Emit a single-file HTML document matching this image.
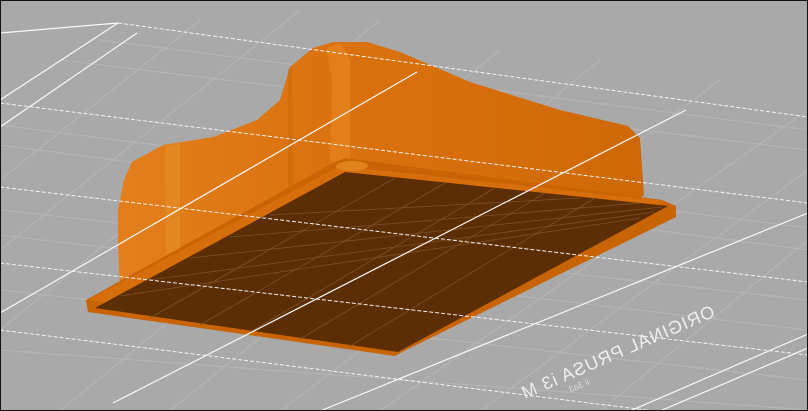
<!DOCTYPE html>
<html><head><style>
html,body{margin:0;padding:0;background:#a8a8a8;overflow:hidden;width:808px;height:411px;}
svg{display:block}
</style></head><body>
<svg width="808" height="411" viewBox="0 0 808 411" xmlns="http://www.w3.org/2000/svg">
<defs>
<linearGradient id="body" x1="0" y1="0" x2="1" y2="0">
<stop offset="0" stop-color="#e27f1c"/><stop offset="0.4" stop-color="#da720e"/><stop offset="1" stop-color="#cf6808"/>
</linearGradient>
</defs>
<rect width="808" height="411" fill="#a9a9a9"/>
<g stroke="#b6b6b6" stroke-width="1" fill="none">
<path d="M0 125 L808 228 M0 145 L808 250 M0 210 L808 300 M0 235 L808 330 M0 290 L808 380 M0 350 L808 410 M60 60 L808 150 M100 40 L808 130"/>
<path d="M60 411 L500 50 M170 411 L600 60 M280 411 L720 80 M380 411 L808 110 M480 411 L808 170 M600 411 L808 240 M0 330 L380 20 M0 250 L300 10 M0 180 L200 20"/>
</g>
<!-- body -->
<path d="M120 290 L118 245 L118 210 L124 180 L132 162 L163 145 L213 137 L257 120 L280 100 L290 67 L313 48 L333 42 L367 42 L400 52 L470 82 L560 110 L628 126 L640 138 L644 195 L630 205 L400 320 Z" fill="url(#body)"/>
<path d="M326 48 L340 43 L350 60 L350 160 L338 166 L330 160 L332 80 Z" fill="#e8891f" opacity="0.6"/>
<path d="M165 146 L166 262 L180 255 L180 143 Z" fill="#e58a25" opacity="0.8"/>
<path d="M288 70 L292 66 L294 200 L288 205 Z" fill="#c96507" opacity="0.5"/>
<!-- flange -->
<path d="M86 300 L88 312 L395 356 L404 351 L676 217 L676 206 L662 200 L345 158 L333 163 Z" fill="#c86306"/>
<path d="M88 300 L340 166 L666 201 L396 350 Z" fill="#d76e0c"/>
<ellipse cx="352" cy="166" rx="16" ry="5" fill="#e2821c"/>
<!-- dark plate -->
<path d="M95 308 L345 172 L668 206 L398 352 Z" fill="#5b2e05"/>
<g stroke="#7d5127" stroke-width="0.8" fill="none">
<path d="M150 318 L395 178 M200 325 L445 183 M250 332 L495 188 M300 339 L545 193 M350 346 L595 198"/>
<path d="M120 296 L640 218 M150 280 L655 212 M190 258 L662 207 M230 237 L640 203 M270 215 L580 198"/>
</g>
<!-- bed lines on top -->
<g stroke="#f2f2f2" stroke-width="1" stroke-dasharray="4 2" fill="none">
<path d="M118 23 L808 117"/>
<path d="M0 103 L808 203"/>
<path d="M0 187 L808 282"/>
<path d="M0 263 L808 355"/>
<path d="M0 330 L808 430"/>
</g>
<g stroke="#f8f8f8" stroke-width="1.2" fill="none">
<path d="M118 23 L0 100"/>
<path d="M118 23 L0 33"/>
<path d="M137 33 L0 127"/>
<path d="M417 72 L0 313"/>
<path d="M686 110 L113 403"/>
<path d="M808 213 L320 411"/>
<path d="M808 334 L630 411"/>
<path d="M808 348 L660 411"/>
</g>
<text transform="translate(716,316) rotate(-23.5) scale(-1,1)" font-family="Liberation Sans, sans-serif" font-size="18" fill="#eeeeee" letter-spacing="1">ORIGINAL PRUSA i3 M</text>
<text transform="translate(590,384) rotate(-23.5) scale(-1,1)" font-family="Liberation Sans, sans-serif" font-size="9" fill="#d8d8d8">ii 3a3</text>
<rect x="0.5" y="0.5" width="807" height="410" fill="none" stroke="#111" stroke-width="1"/>
</svg>
</body></html>
